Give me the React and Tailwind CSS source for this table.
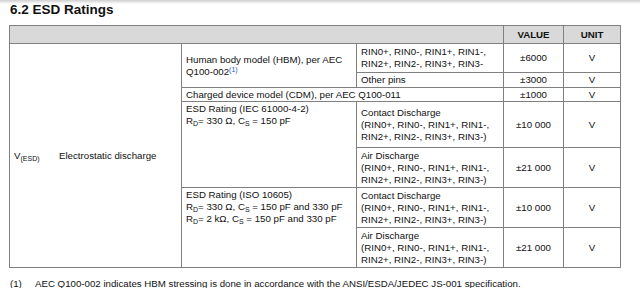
import React from 'react';

const cell = 'border border-[#808080] px-[4px] align-middle';
const num = 'border border-[#808080] text-center align-middle';

const pins = (
  <>
    (RIN0+, RIN0-, RIN1+, RIN1-,
    <br />
    RIN2+, RIN2-, RIN3+, RIN3-)
  </>
);

const Sub = ({ children }) => (
  <span className="relative top-[2px] text-[7px] leading-none">{children}</span>
);

const Rd = ({ children }) => (
  <>
    R<Sub>D</Sub>= {children}
  </>
);
const Cs = () => (
  <>
    C<Sub>S</Sub>
  </>
);

export default function App() {
  return (
    <div className="relative w-[640px] h-[288px] bg-white text-[#111] font-['Liberation_Sans',Arial,sans-serif] overflow-hidden">
      {/* top shadow */}
      <div className="absolute left-0 top-0 w-full h-[4px] bg-gradient-to-b from-[#cfcfcf] to-transparent" />

      <h2 className="ml-[10px] pt-[1px] h-[25px] text-[13.5px] leading-[17px] font-bold">6.2 ESD Ratings</h2>

      <table className="ml-[9px] w-[611px] border-collapse table-fixed text-[9.7px] leading-[12px]">
        <colgroup>
          <col className="w-[172px]" />
          <col className="w-[175px]" />
          <col className="w-[147px]" />
          <col className="w-[60px]" />
          <col className="w-[57px]" />
        </colgroup>
        <thead>
          <tr className="h-[18px] bg-[#d9d9d9]">
            <th colSpan={3} className="border border-[#808080]" />
            <th className="border border-[#808080] font-bold text-center">VALUE</th>
            <th className="border border-[#808080] font-bold text-center">UNIT</th>
          </tr>
        </thead>
        <tbody>
          <tr className="h-[29px]">
            <td rowSpan={7} className={cell}>
              <div className="flex items-center">
                <span className="w-[45px]">
                  V<Sub>(ESD)</Sub>
                </span>
                <span>Electrostatic discharge</span>
              </div>
            </td>
            <td rowSpan={2} className={cell}>
              Human body model (HBM), per AEC
              <br />
              Q100-002<span className="relative -top-[3px] text-[7px] leading-none text-[#2b4fd0]">(1)</span>
            </td>
            <td className={cell}>
              RIN0+, RIN0-, RIN1+, RIN1-,
              <br />
              RIN2+, RIN2-, RIN3+, RIN3-
            </td>
            <td className={num}>±6000</td>
            <td className={num}>V</td>
          </tr>
          <tr className="h-[15px]">
            <td className={cell}>Other pins</td>
            <td className={num}>±3000</td>
            <td className={num}>V</td>
          </tr>
          <tr className="h-[14px]">
            <td colSpan={2} className={cell}>Charged device model (CDM), per AEC Q100-011</td>
            <td className={num}>±1000</td>
            <td className={num}>V</td>
          </tr>
          <tr className="h-[46px]">
            <td rowSpan={2} className="border border-[#808080] px-[4px] pt-[1px] align-top">
              ESD Rating (IEC 61000-4-2)
              <br />
              <Rd>330 Ω, </Rd>
              <Cs /> = 150 pF
            </td>
            <td className={cell}>
              Contact Discharge
              <br />
              {pins}
            </td>
            <td className={num}>±10 000</td>
            <td className={num}>V</td>
          </tr>
          <tr className="h-[40px]">
            <td className={cell}>
              Air Discharge
              <br />
              {pins}
            </td>
            <td className={num}>±21 000</td>
            <td className={num}>V</td>
          </tr>
          <tr className="h-[40px]">
            <td rowSpan={2} className="border border-[#808080] px-[4px] pt-[1px] align-top">
              ESD Rating (ISO 10605)
              <br />
              <Rd>330 Ω, </Rd>
              <Cs /> = 150 pF and 330 pF
              <br />
              <Rd>2 kΩ, </Rd>
              <Cs /> = 150 pF and 330 pF
            </td>
            <td className={cell}>
              Contact Discharge
              <br />
              {pins}
            </td>
            <td className={num}>±10 000</td>
            <td className={num}>V</td>
          </tr>
          <tr className="h-[40px]">
            <td className={cell}>
              Air Discharge
              <br />
              {pins}
            </td>
            <td className={num}>±21 000</td>
            <td className={num}>V</td>
          </tr>
        </tbody>
      </table>

      <div className="flex mt-[10px] ml-[10px] text-[9.7px] leading-[12px]">
        <span className="w-[25px]">(1)</span>
        <span>AEC Q100-002 indicates HBM stressing is done in accordance with the ANSI/ESDA/JEDEC JS-001 specification.</span>
      </div>
    </div>
  );
}
